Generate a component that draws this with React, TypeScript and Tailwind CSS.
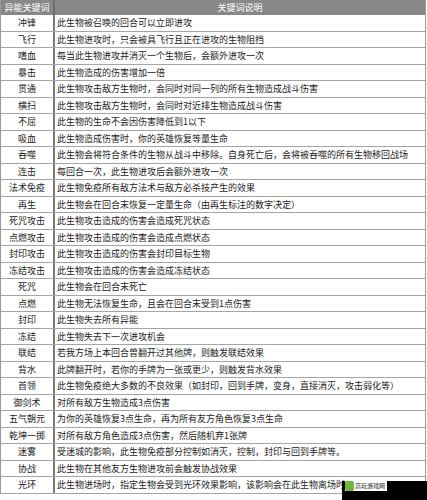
const rows: [string, string][] = [
  ["冲锋", "此生物被召唤的回合可以立即进攻"],
  ["飞行", "此生物进攻时，只会被具飞行且正在进攻的生物阻挡"],
  ["嗜血", "每当此生物进攻并消灭一个生物后，会额外进攻一次"],
  ["暴击", "此生物造成的伤害增加一倍"],
  ["贯通", "此生物攻击敌方生物时，会同时对同一列的所有生物造成战斗伤害"],
  ["横扫", "此生物攻击敌方生物时，会同时对近排生物造成战斗伤害"],
  ["不屈", "此生物的生命不会因伤害降低到1以下"],
  ["吸血", "此生物造成伤害时，你的英雄恢复等量生命"],
  ["吞噬", "此生物会将符合条件的生物从战斗中移除。自身死亡后，会将被吞噬的所有生物移回战场"],
  ["连击", "每回合一次，此生物进攻后会额外进攻一次"],
  ["法术免疫", "此生物免疫所有敌方法术与敌方必杀技产生的效果"],
  ["再生", "此生物会在回合末恢复一定量生命（由再生标注的数字决定）"],
  ["死咒攻击", "此生物攻击造成的伤害会造成死咒状态"],
  ["点燃攻击", "此生物攻击造成的伤害会造成点燃状态"],
  ["封印攻击", "此生物攻击造成的伤害会封印目标生物"],
  ["冻结攻击", "此生物攻击造成的伤害会造成冻结状态"],
  ["死咒", "此生物会在回合末死亡"],
  ["点燃", "此生物无法恢复生命，且会在回合末受到1点伤害"],
  ["封印", "此生物失去所有异能"],
  ["冻结", "此生物失去下一次进攻机会"],
  ["联结", "若我方场上本回合曾翻开过其他牌，则触发联结效果"],
  ["背水", "此牌翻开时，若你的手牌为一张或更少，则触发背水效果"],
  ["首领", "此生物免疫绝大多数的不良效果（如封印，回到手牌，变身，直接消灭，攻击弱化等）"],
  ["御剑术", "对所有敌方生物造成3点伤害"],
  ["五气朝元", "为你的英雄恢复3点生命，再为所有友方角色恢复3点生命"],
  ["乾坤一掷", "对所有敌方角色造成3点伤害，然后随机弃1张牌"],
  ["迷雾", "受迷城的影响，此生物免疫部分控制如消灭，控制，封印与回到手牌等。"],
  ["协战", "此生物在其他友方生物进攻前会触发协战效果"],
  ["光环", "此生物进场时，指定生物会受到光环效果影响，该影响会在此生物离场时消失"],
];

export default function App() {
  return (
    <div
      className="relative w-[427px] h-[500px] bg-white overflow-hidden text-[9px] leading-none text-[#222]"
      style={{ fontFamily: '"Noto Sans CJK SC", "Noto Sans", sans-serif' }}
    >
      <div className="w-[426px] border-l border-r border-[#9a9a9a]">
        {/* header */}
        <div className="flex h-[15px] bg-[#888888] text-white">
          <div className="w-[54px] flex items-center justify-center border-r-2 border-[#6f6f6f]">
            异能关键词
          </div>
          <div className="flex-1 flex items-center justify-center">关键词说明</div>
        </div>
        {rows.map(([k, d]) => (
          <div key={k} className="flex h-[16.5px] border-b border-[#a5a5a5]">
            <div className="w-[54px] flex items-center justify-center border-r-2 border-[#7a7a7a]">
              {k}
            </div>
            <div className="flex-1 flex items-center pl-[2px] whitespace-nowrap overflow-hidden">
              {d}
            </div>
          </div>
        ))}
      </div>

      {/* watermark */}
      <div className="absolute right-0 bottom-0 w-[85px] h-[19px] bg-black" />
      <div className="absolute left-[345px] top-[480px] h-[11px] flex items-center bg-white pr-[2px]">
        <div className="w-[9px] h-[10px] bg-[#6bb83a] rounded-[2px] mr-[1px]" />
        <span className="text-[6px] text-[#222]">高玩游戏网</span>
      </div>
    </div>
  );
}
